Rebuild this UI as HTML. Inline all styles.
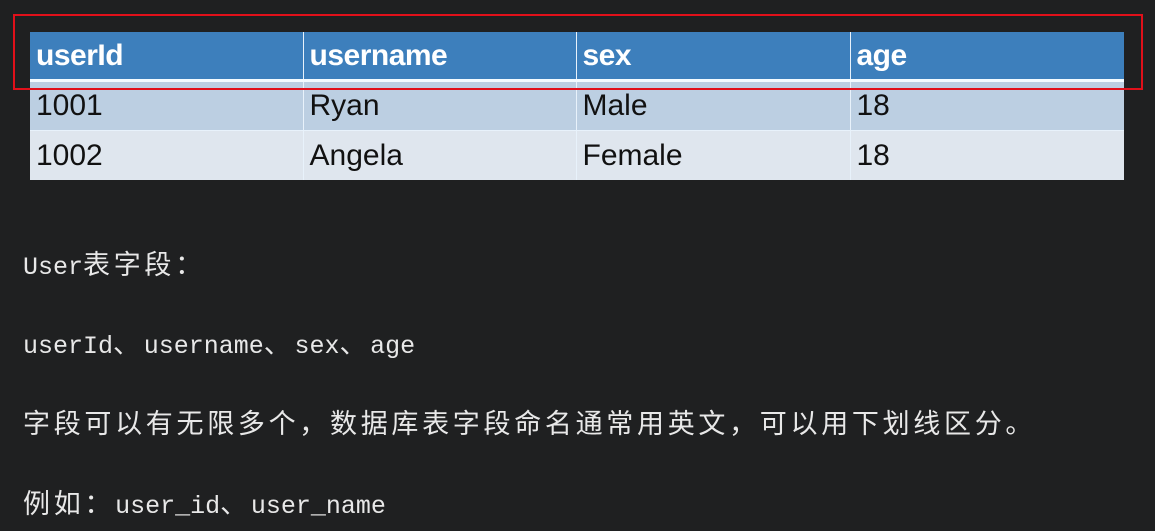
<!DOCTYPE html>
<html><head><meta charset="utf-8"><style>
body{margin:0;width:1155px;height:531px;background:#1f2021;overflow:hidden;position:relative}
table{position:absolute;left:30px;top:32px;width:1094px;border-collapse:collapse;font-family:"Liberation Sans",sans-serif;table-layout:fixed}
td{padding:0 0 0 6px;border-left:1px solid #e8f2fb;font-size:30px;color:#111;white-space:nowrap;overflow:hidden}
td:first-child{border-left:none}
tr.h td{background:#3d7fbc;color:#fff;font-weight:bold;height:47px;border-bottom:3px solid #f4fbff;letter-spacing:-0.5px}
tr.r1 td{background:#bccfe2;height:48px}
tr.r2 td{background:#dfe6ee;height:49px;border-top:1px solid #e8f2fb}
.red{position:absolute;left:13px;top:14px;width:1126px;height:72px;border:2px solid #e0101a}
.t{position:absolute;left:23px;color:#e8e8e8;font-family:"Liberation Mono","Noto Sans CJK SC",monospace;font-size:25px;white-space:nowrap}
.c{font-family:"Noto Sans CJK SC",sans-serif;font-size:27px;letter-spacing:3.7px}
</style></head><body>
<table>
<colgroup><col style="width:273px"><col style="width:273px"><col style="width:274px"><col style="width:274px"></colgroup>
<tr class="h"><td>userId</td><td>username</td><td>sex</td><td>age</td></tr>
<tr class="r1"><td>1001</td><td>Ryan</td><td>Male</td><td>18</td></tr>
<tr class="r2"><td>1002</td><td>Angela</td><td>Female</td><td>18</td></tr>
</table>
<div class="red"></div>
<div class="t" style="top:243px">User<span class="c">表字段：</span></div>
<div class="t" style="top:322px">userId<span class="c">、</span>username<span class="c">、</span>sex<span class="c">、</span>age</div>
<div class="t c" style="top:402px">字段可以有无限多个，数据库表字段命名通常用英文，可以用下划线区分。</div>
<div class="t" style="top:482px"><span class="c">例如：</span>user_id<span class="c">、</span>user_name</div>
</body></html>
